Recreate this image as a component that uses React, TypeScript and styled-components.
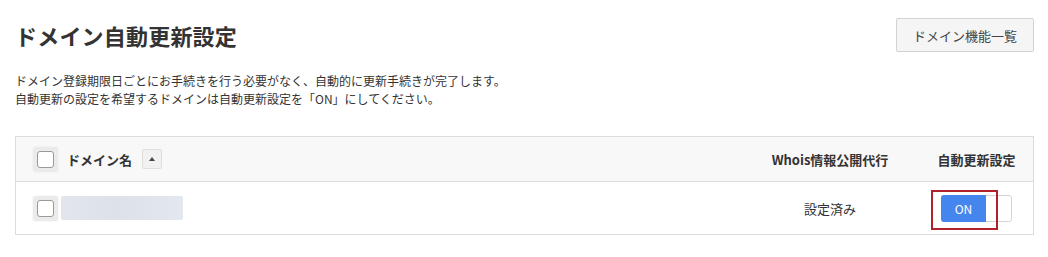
import React, { useState } from "react";
import styled, { createGlobalStyle } from "styled-components";

const GlobalStyle = createGlobalStyle`
    body {
        margin: 0;
        background: #fff;
        color: #333;
        font-family: "Noto Sans CJK JP", "Noto Sans", sans-serif;
    }
`;

const Page = styled.div`
    padding: 18px 14px 20px 15px;
`;

const TitleBar = styled.div`
    display: flex;
    align-items: center;
    justify-content: space-between;
`;

const Title = styled.h1`
    margin: 0;
    font-size: 22px;
    line-height: 34px;
    font-weight: bold;
    color: #333;
    letter-spacing: 0.2px;
`;

const LinkButton = styled.button`
    height: 34px;
    width: 138px;
    padding: 0;
    background: #f5f5f5;
    border: 1px solid #d2d2d2;
    border-radius: 2px;
    font-family: inherit;
    font-size: 13px;
    color: #444;
    cursor: pointer;
`;

const Description = styled.p`
    margin: 20px 0 28px;
    font-size: 12px;
    line-height: 18px;
    color: #333;
`;

const Table = styled.div`
    border: 1px solid #dcdcdc;
    display: grid;
    grid-template-columns: 1fr 180px 113px;
`;

const Cell = styled.div<{ $head?: boolean; $center?: boolean }>`
    display: flex;
    align-items: center;
    justify-content: ${(p) => (p.$center ? "center" : "flex-start")};
    height: ${(p) => (p.$head ? "44px" : "52px")};
    background: ${(p) => (p.$head ? "#f8f8f8" : "#fff")};
    border-bottom: ${(p) => (p.$head ? "1px solid #dcdcdc" : "none")};
    font-size: 13px;
    font-weight: ${(p) => (p.$head ? "bold" : "normal")};
    color: #333;
`;

const NameCell = styled(Cell)`
    padding-left: 17px;
    gap: 9px;
`;

const CheckFrame = styled.span`
    display: flex;
    align-items: center;
    justify-content: center;
    width: 25px;
    height: 25px;
    background: #ebebeb;
    border-radius: 3px;
    box-shadow: 0 0 2px #e6e6e6;
`;

const CheckBox = styled.span<{ $checked: boolean }>`
    width: 17px;
    height: 17px;
    box-sizing: border-box;
    background: ${(p) => (p.$checked ? "#4285f4" : "#fff")};
    border: 1px solid #9a9a9a;
    border-radius: 3px;
    cursor: pointer;
`;

const SortButton = styled.span`
    display: flex;
    align-items: center;
    justify-content: center;
    width: 20px;
    height: 20px;
    margin-left: 1px;
    box-sizing: border-box;
    background: #f1f1f1;
    border: 1px solid #dedede;
    border-radius: 2px;
`;

const Masked = styled.span`
    width: 122px;
    height: 24px;
    margin-left: -6px;
    border-radius: 2px;
    background: linear-gradient(90deg, #e2e6ec 0%, #dde2ea 45%, #e3e7ee 100%);
`;

const ToggleWrap = styled.div`
    position: relative;
    display: flex;
    width: 71px;
    height: 27px;
    box-sizing: border-box;
    border: 1px solid #d4d4d4;
    border-radius: 3px;
    background: #fff;
    &::after {
        content: "";
        position: absolute;
        left: -11px;
        top: -6px;
        width: 67px;
        height: 40px;
        box-sizing: border-box;
        border: 2px solid #b0212a;
    }
`;

const ToggleOn = styled.span`
    display: flex;
    align-items: center;
    justify-content: center;
    width: 45px;
    margin: -1px 0 -1px -1px;
    background: #4586ee;
    border-radius: 3px 0 0 3px;
    color: #fff;
    font-size: 12px;
`;

const Checkbox = ({ checked, onToggle }: { checked: boolean; onToggle: () => void }) => (
    <CheckFrame>
        <CheckBox $checked={checked} onClick={onToggle} />
    </CheckFrame>
);

const App = () => {
    const [allChecked, setAllChecked] = useState(false);
    const [rowChecked, setRowChecked] = useState(false);

    return (
        <Page>
            <GlobalStyle />
            <TitleBar>
                <Title>ドメイン自動更新設定</Title>
                <LinkButton>ドメイン機能一覧</LinkButton>
            </TitleBar>
            <Description>
                ドメイン登録期限日ごとにお手続きを行う必要がなく、自動的に更新手続きが完了します。
                <br />
                自動更新の設定を希望するドメインは自動更新設定を「ON」にしてください。
            </Description>
            <Table>
                <NameCell $head>
                    <Checkbox checked={allChecked} onToggle={() => setAllChecked(!allChecked)} />
                    ドメイン名
                    <SortButton>
                        <svg width="6" height="4" viewBox="0 0 6 4">
                            <path d="M0 4 L3 0 L6 4 Z" fill="#444" />
                        </svg>
                    </SortButton>
                </NameCell>
                <Cell $head $center>
                    Whois情報公開代行
                </Cell>
                <Cell $head $center>
                    自動更新設定
                </Cell>

                <NameCell>
                    <Checkbox checked={rowChecked} onToggle={() => setRowChecked(!rowChecked)} />
                    <Masked />
                </NameCell>
                <Cell $center>設定済み</Cell>
                <Cell $center>
                    <ToggleWrap>
                        <ToggleOn>ON</ToggleOn>
                    </ToggleWrap>
                </Cell>
            </Table>
        </Page>
    );
};

export default App;
